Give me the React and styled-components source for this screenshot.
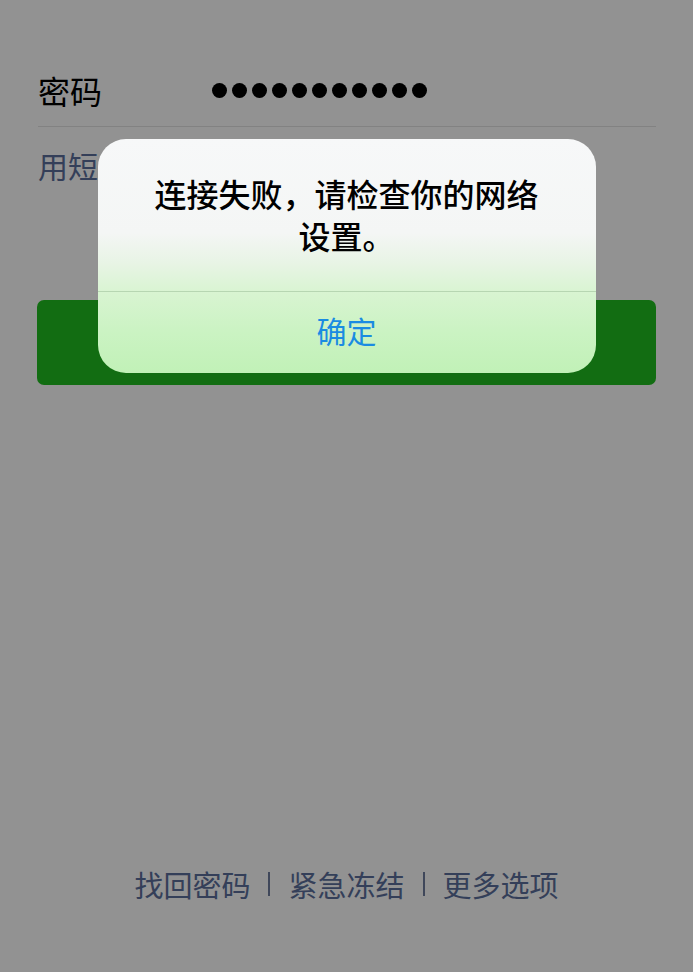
import React from "react";
import styled, { createGlobalStyle } from "styled-components";

const GlobalStyle = createGlobalStyle`
  html, body {
    margin: 0;
    padding: 0;
    background: #ffffff;
  }
  body {
    font-family: "Noto Sans CJK SC", "Noto Sans", sans-serif;
  }
`;

const Page = styled.div`
  position: relative;
  width: 693px;
  height: 972px;
  overflow: hidden;
  background: #ffffff;
  display: flex;
  flex-direction: column;
`;

const Form = styled.div`
  padding: 54px 37px 0 38px;
  display: flex;
  flex-direction: column;
`;

const Row = styled.div`
  height: 72px;
  display: flex;
  align-items: center;
  border-bottom: 1px solid #e4e4e4;
`;

const Label = styled.div`
  width: 174px;
  font-size: 32px;
  color: #000;
`;

const Dots = styled.div`
  display: flex;
  gap: 5px;
`;

const Dot = styled.span`
  width: 15px;
  height: 15px;
  border-radius: 50%;
  background: #000;
`;

const SmsLink = styled.div`
  margin-top: 17px;
  font-size: 30px;
  line-height: 42px;
  color: #5b6f9c;
`;

const LoginButton = styled.button`
  margin: 114px 0 0 -1px;
  height: 85px;
  border: 0;
  border-radius: 7px;
  background: #20bf20;
  color: #fff;
  font-family: inherit;
  font-size: 32px;
`;

const Footer = styled.div`
  margin-top: auto;
  padding-bottom: 68px;
  display: flex;
  justify-content: center;
  align-items: center;
  gap: 18px;
  font-size: 29px;
  line-height: 40px;
  color: #5b6f9c;
`;

const Sep = styled.span`
  width: 2px;
  height: 24px;
  background: #6f7d9e;
`;

const Overlay = styled.div`
  position: absolute;
  inset: 0;
  background: rgba(0, 0, 0, 0.427);
  display: flex;
  justify-content: center;
  align-items: flex-start;
  padding-top: 139px;
`;

const Alert = styled.div`
  width: 498px;
  border-radius: 28px;
  overflow: hidden;
  background: linear-gradient(
    180deg,
    #f7f8f9 0%,
    #f4f6f5 40%,
    #e8f4e5 53%,
    #d8f4d1 66%,
    #cbf3c3 82%,
    #c1f1b7 100%
  );
  display: flex;
  flex-direction: column;
`;

const Title = styled.div`
  padding: 33px 30px 35px;
  text-align: center;
  font-size: 32px;
  line-height: 42px;
  font-weight: 500;
  color: #000;
`;

const Confirm = styled.div`
  height: 75px;
  padding-bottom: 6px;
  border-top: 1px solid #b7d6b2;
  display: flex;
  align-items: center;
  justify-content: center;
  font-size: 30px;
  color: #1a8be2;
`;

export default function App() {
  return (
    <Page>
      <GlobalStyle />
      <Form>
        <Row>
          <Label>密码</Label>
          <Dots>
            {Array.from({ length: 11 }).map((_, i) => (
              <Dot key={i} />
            ))}
          </Dots>
        </Row>
        <SmsLink>用短信验证码登录</SmsLink>
        <LoginButton>登录</LoginButton>
      </Form>
      <Footer>
        <span>找回密码</span>
        <Sep />
        <span>紧急冻结</span>
        <Sep />
        <span>更多选项</span>
      </Footer>
      <Overlay>
        <Alert>
          <Title>
            连接失败，请检查你的网络
            <br />
            设置。
          </Title>
          <Confirm>确定</Confirm>
        </Alert>
      </Overlay>
    </Page>
  );
}
